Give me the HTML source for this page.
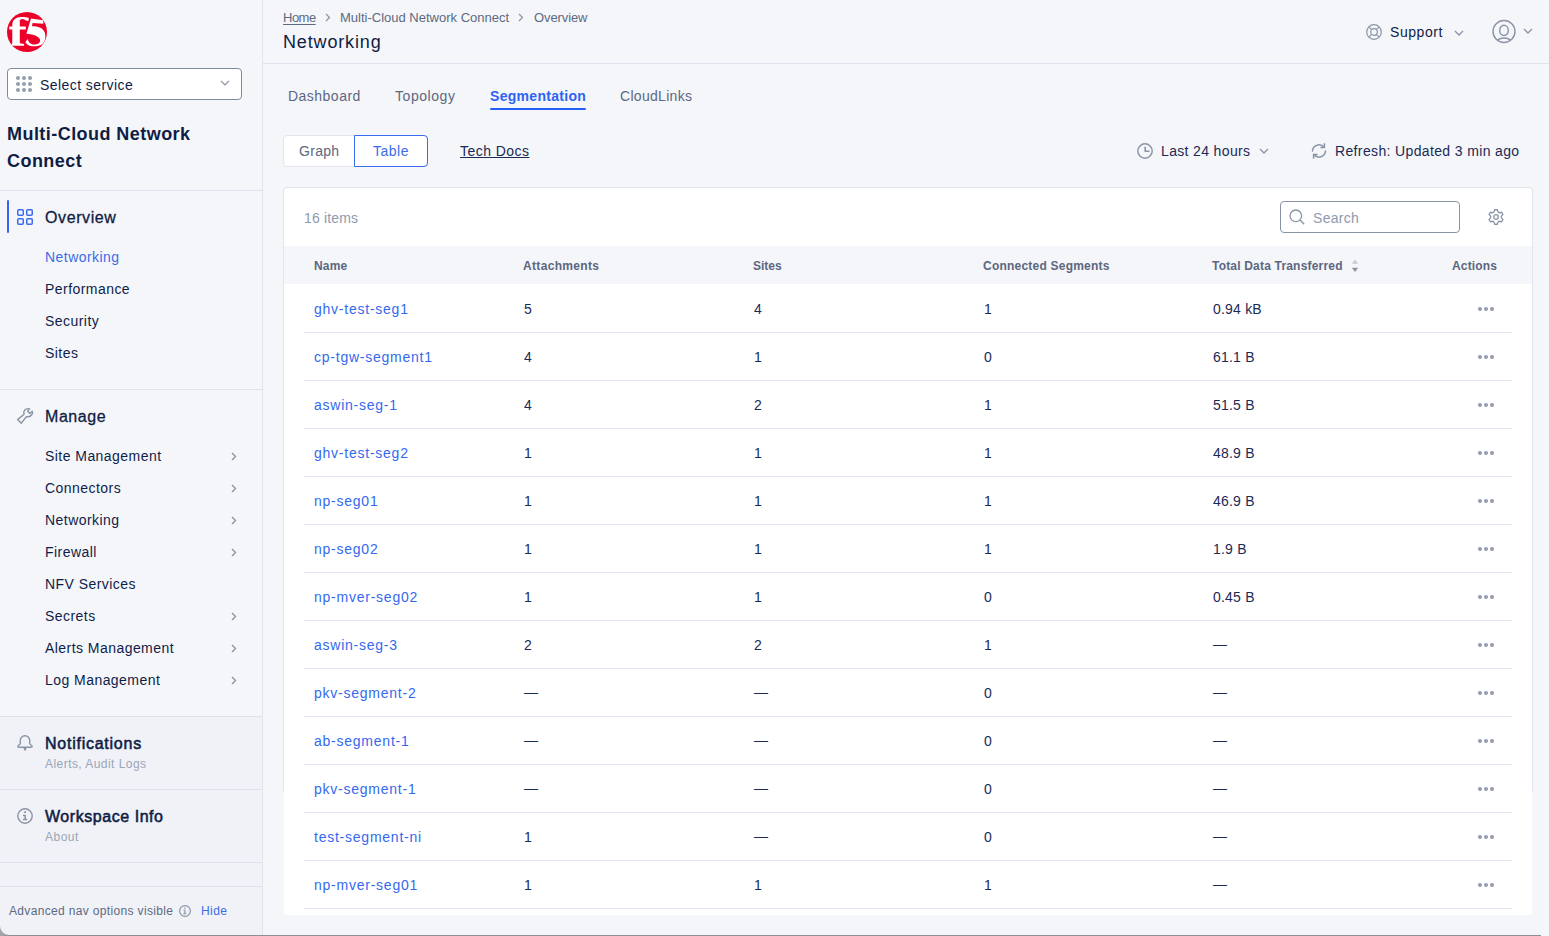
<!DOCTYPE html>
<html><head><meta charset="utf-8">
<style>
*{box-sizing:border-box;margin:0;padding:0}
html,body{width:1549px;height:936px;overflow:hidden;background:#f5f6f9;-webkit-font-smoothing:antialiased;font-family:"Liberation Sans",sans-serif;color:#0f1d45}
.a{position:absolute;white-space:nowrap;line-height:1}
svg{position:absolute;overflow:visible}
#side{position:absolute;left:0;top:0;width:263px;height:936px;background:#f5f6f9;border-right:1px solid #dfe3ec}
.hr{position:absolute;left:0;width:262px;height:1px;background:#dde3ee}
.sub{font-size:14px;letter-spacing:0.45px;color:#0f1d4a}
.chev{position:absolute;left:231px;width:6px;height:9px}
#main{position:absolute;left:263px;top:0;width:1286px;height:936px;background:#f5f6f9}
.tab{font-size:14px;letter-spacing:0.3px;color:#5b6882}
.th{font-size:12px;font-weight:700;color:#5b6780;letter-spacing:0.2px}
.td{font-size:14px;color:#1b2a55;letter-spacing:0.2px}
.lnk{font-size:14px;color:#3469ee;letter-spacing:0.76px}
.rl{position:absolute;left:304px;width:1208px;height:1px;background:#dfe4ee}
.dots{position:absolute;left:1478px;width:16px;height:4px}
</style></head><body>
<div id="side">
  <!-- F5 logo -->
  <svg style="left:7px;top:12px" width="40" height="40" viewBox="0 0 40 40">
    <circle cx="20" cy="20" r="20" fill="#ec0029"/>
    <path fill="#fff" d="M5.3 31.5L5.3 13C5.3 8.2 8.6 5.1 14.5 5.1C17.5 5.1 20 5.4 21.8 6L21.4 9C19.5 9.2 18.2 7.6 16.5 7.2C14.8 6.9 13.3 7.5 12.8 8.6L12.8 31.2L17.1 32L17.1 33.8L4.7 33.8L4.7 32Z M2.3 14.6L18.8 14.5L18.8 17.5L2.5 17.5C2.1 16.6 2.1 15.4 2.3 14.6Z M24 6.4L36.3 8.3L36.3 11.8L25.6 11.1L25 14.2C30 14 35.5 15.5 37.6 20C39 24 38.5 29 35.5 32C33 34 29 34.4 25.5 34.2C22.5 34 20 33 18.4 30.2L20.5 26.9C21.5 29.5 22.8 31.2 24.5 32C26.5 32.9 29.5 32.8 31.5 31.5C33.5 30 33.6 27.5 32 26C29.5 23.5 24.5 22 19.4 21.8Z"/>
  </svg>
  <!-- select service -->
  <div style="position:absolute;left:7px;top:68px;width:235px;height:32px;background:#fff;border:1px solid #7f8a9e;border-radius:4px"></div>
  <svg style="left:16px;top:76px" width="16" height="16" viewBox="0 0 16 16" fill="#939daf">
    <circle cx="2" cy="2" r="2"/><circle cx="8" cy="2" r="2"/><circle cx="14" cy="2" r="2"/>
    <circle cx="2" cy="8" r="2"/><circle cx="8" cy="8" r="2"/><circle cx="14" cy="8" r="2"/>
    <circle cx="2" cy="14" r="2"/><circle cx="8" cy="14" r="2"/><circle cx="14" cy="14" r="2"/>
  </svg>
  <div class="a" style="left:40px;top:78px;font-size:14px;letter-spacing:0.43px;color:#0f1d45">Select service</div>
  <svg style="left:220px;top:80px" width="10" height="6" viewBox="0 0 10 6"><path d="M1 1l4 4 4-4" fill="none" stroke="#8a94a7" stroke-width="1.2"/></svg>

  <div class="a" style="left:7px;top:121px;font-size:18px;font-weight:700;letter-spacing:0.45px;color:#0f1d45;line-height:27px">Multi-Cloud Network<br>Connect</div>

  <div class="hr" style="top:190px"></div>
  <!-- Overview -->
  <div style="position:absolute;left:7px;top:200px;width:2px;height:33px;background:#3366f0;border-radius:1px"></div>
  <svg style="left:17px;top:209px" width="16" height="16" viewBox="0 0 16 16" fill="none" stroke="#3a6cf0" stroke-width="1.5">
    <rect x="0.75" y="0.75" width="5.5" height="5.5" rx="1"/><rect x="9.75" y="0.75" width="5.5" height="5.5" rx="1"/>
    <rect x="0.75" y="9.75" width="5.5" height="5.5" rx="1"/><rect x="9.75" y="9.75" width="5.5" height="5.5" rx="1"/>
  </svg>
  <div class="a" style="left:45px;top:210px;font-size:16px;letter-spacing:0.6px;color:#0f1d45;-webkit-text-stroke:0.3px #0f1d45">Overview</div>
  <div class="a sub" style="left:45px;top:250px;color:#3a6ce8">Networking</div>
  <div class="a sub" style="left:45px;top:282px">Performance</div>
  <div class="a sub" style="left:45px;top:314px">Security</div>
  <div class="a sub" style="left:45px;top:346px">Sites</div>

  <div class="hr" style="top:389px"></div>
  <!-- Manage -->
  <svg style="left:17px;top:408px" width="16" height="16" viewBox="0 0 16 16" fill="none" stroke="#8a94a7" stroke-width="1.4" stroke-linejoin="round">
    <path d="M0.6 11.6L4.2 15.2L9.4 8.6C11 9 13.5 8.5 14.8 6.8C15.6 5.8 15.8 4.4 15.3 3.3L12.9 5.4L10.6 3.2L12.6 0.9C10.8 0.3 9 0.8 7.8 2C6.9 3 6.6 4.9 7.1 6.2Z"/>
  </svg>
  <div class="a" style="left:45px;top:409px;font-size:16px;letter-spacing:0.55px;color:#0f1d45;-webkit-text-stroke:0.3px #0f1d45">Manage</div>
  <div class="a sub" style="left:45px;top:449px">Site Management</div>
  <div class="a sub" style="left:45px;top:481px">Connectors</div>
  <div class="a sub" style="left:45px;top:513px">Networking</div>
  <div class="a sub" style="left:45px;top:545px">Firewall</div>
  <div class="a sub" style="left:45px;top:577px">NFV Services</div>
  <div class="a sub" style="left:45px;top:609px">Secrets</div>
  <div class="a sub" style="left:45px;top:641px">Alerts Management</div>
  <div class="a sub" style="left:45px;top:673px">Log Management</div>
  <svg class="chev" style="top:452px" viewBox="0 0 6 9"><path d="M1 1l3.5 3.5L1 8" fill="none" stroke="#8a94a7" stroke-width="1.4"/></svg>
  <svg class="chev" style="top:484px" viewBox="0 0 6 9"><path d="M1 1l3.5 3.5L1 8" fill="none" stroke="#8a94a7" stroke-width="1.4"/></svg>
  <svg class="chev" style="top:516px" viewBox="0 0 6 9"><path d="M1 1l3.5 3.5L1 8" fill="none" stroke="#8a94a7" stroke-width="1.4"/></svg>
  <svg class="chev" style="top:548px" viewBox="0 0 6 9"><path d="M1 1l3.5 3.5L1 8" fill="none" stroke="#8a94a7" stroke-width="1.4"/></svg>
  <svg class="chev" style="top:612px" viewBox="0 0 6 9"><path d="M1 1l3.5 3.5L1 8" fill="none" stroke="#8a94a7" stroke-width="1.4"/></svg>
  <svg class="chev" style="top:644px" viewBox="0 0 6 9"><path d="M1 1l3.5 3.5L1 8" fill="none" stroke="#8a94a7" stroke-width="1.4"/></svg>
  <svg class="chev" style="top:676px" viewBox="0 0 6 9"><path d="M1 1l3.5 3.5L1 8" fill="none" stroke="#8a94a7" stroke-width="1.4"/></svg>

  <!-- bottom sections -->
  <div style="position:absolute;left:0;top:716px;width:262px;height:220px;background:#f0f2f7"></div>
  <div class="hr" style="top:716px"></div>
  <svg style="left:17px;top:735px" width="16" height="16" viewBox="0 0 16 16" fill="none" stroke="#8a94a7" stroke-width="1.4" stroke-linejoin="round">
    <path d="M8 0.8C5 0.8 3.3 3 3.3 5.5V8.4C3.3 9.6 0.8 10.4 0.8 11.5C0.8 12.1 1.5 12.3 2.5 12.3H13.5C14.5 12.3 15.2 12.1 15.2 11.5C15.2 10.4 12.7 9.6 12.7 8.4V5.5C12.7 3 11 0.8 8 0.8Z"/><path d="M6.4 12.4L7 14.9C7.3 15.7 8.7 15.7 9 14.9L9.6 12.4Z" fill="#8a94a7" stroke="none"/>
  </svg>
  <div class="a" style="left:45px;top:736px;font-size:16px;letter-spacing:0.75px;color:#0f1d45;-webkit-text-stroke:0.55px #0f1d45">Notifications</div>
  <div class="a" style="left:45px;top:758px;font-size:12px;letter-spacing:0.45px;color:#9aa5b8">Alerts, Audit Logs</div>
  <div class="hr" style="top:789px"></div>
  <svg style="left:17px;top:808px" width="16" height="16" viewBox="0 0 16 16" fill="none" stroke="#8a94a7" stroke-width="1.4">
    <circle cx="8" cy="8" r="7.2"/><path d="M6 7.4H8.2V11.6M5.9 11.6H10.2" stroke-width="1.5"/><rect x="7.1" y="3.3" width="1.9" height="1.7" fill="#8a94a7" stroke="none"/>
  </svg>
  <div class="a" style="left:45px;top:809px;font-size:16px;letter-spacing:0.55px;color:#0f1d45;-webkit-text-stroke:0.55px #0f1d45">Workspace Info</div>
  <div class="a" style="left:45px;top:831px;font-size:12px;letter-spacing:0.5px;color:#9aa5b8">About</div>
  <div class="hr" style="top:862px"></div>
  <div class="hr" style="top:886px"></div>
  <div class="a" style="left:9px;top:905px;font-size:12px;letter-spacing:0.34px;color:#5d6a82">Advanced nav options visible</div>
  <svg style="left:179px;top:905px" width="12" height="12" viewBox="0 0 12 12" fill="none" stroke="#8a94a7" stroke-width="1.2">
    <circle cx="6" cy="6" r="5.4"/><path d="M4.5 5.3H5.9V8.7M4.3 8.7H7.4" stroke-width="1.1"/><rect x="5.2" y="2.5" width="1.3" height="1.2" fill="#8a94a7" stroke="none"/>
  </svg>
  <div class="a" style="left:201px;top:905px;font-size:12px;letter-spacing:0.4px;color:#3a6ce8">Hide</div>
</div>

<div id="main"></div>
<!-- header -->
<div class="a" style="left:283px;top:11px;font-size:13px;letter-spacing:-0.5px;color:#5d6a82;text-decoration:underline;text-underline-offset:2px">Home</div>
<svg style="left:325px;top:13px" width="6" height="9" viewBox="0 0 6 9"><path d="M1 1l3.5 3.5L1 8" fill="none" stroke="#8a94a7" stroke-width="1.2"/></svg>
<div class="a" style="left:340px;top:11px;font-size:13px;color:#5d6a82">Multi-Cloud Network Connect</div>
<svg style="left:518px;top:13px" width="6" height="9" viewBox="0 0 6 9"><path d="M1 1l3.5 3.5L1 8" fill="none" stroke="#8a94a7" stroke-width="1.2"/></svg>
<div class="a" style="left:534px;top:11px;font-size:13px;color:#5d6a82;letter-spacing:-0.1px">Overview</div>
<div class="a" style="left:283px;top:33px;font-size:18px;letter-spacing:0.85px;color:#0f1d45">Networking</div>
<div style="position:absolute;left:263px;top:63px;width:1286px;height:1px;background:#dfe4ee"></div>

<svg style="left:1366px;top:24px" width="16" height="16" viewBox="0 0 16 16" fill="none" stroke="#8a94a7" stroke-width="1.2">
  <circle cx="8" cy="8" r="7.3"/><circle cx="8" cy="8" r="3.3"/><path d="M2.8 2.8l2.9 2.9M13.2 2.8l-2.9 2.9M2.8 13.2l2.9-2.9M13.2 13.2l-2.9-2.9"/>
</svg>
<div class="a" style="left:1390px;top:25px;font-size:14px;letter-spacing:0.55px;color:#0f1d45">Support</div>
<svg style="left:1454px;top:30px" width="10" height="6" viewBox="0 0 10 6"><path d="M1 1l4 4 4-4" fill="none" stroke="#8a94a7" stroke-width="1.3"/></svg>
<svg style="left:1492px;top:20px" width="24" height="24" viewBox="0 0 24 24" fill="none" stroke="#8a94a7" stroke-width="1.4">
  <circle cx="12" cy="11.5" r="11"/><ellipse cx="12" cy="10.4" rx="4.3" ry="5.1"/><path d="M5.2 20.1C7.2 18.7 9.5 18 12 18s4.8.7 6.8 2.1"/>
</svg>
<svg style="left:1523px;top:28px" width="10" height="6" viewBox="0 0 10 6"><path d="M1 1l4 4 4-4" fill="none" stroke="#8a94a7" stroke-width="1.3"/></svg>

<!-- tabs -->
<div class="a tab" style="left:288px;top:89px;letter-spacing:0.48px">Dashboard</div>
<div class="a tab" style="left:395px;top:89px;letter-spacing:0.55px">Topology</div>
<div class="a tab" style="left:490px;top:89px;font-weight:700;color:#2d63f2">Segmentation</div>
<div style="position:absolute;left:490px;top:108px;width:96px;height:2px;background:#2260f5;border-radius:1px"></div>
<div class="a tab" style="left:620px;top:89px">CloudLinks</div>

<!-- graph/table -->
<div style="position:absolute;left:283px;top:135px;width:145px;height:32px;background:#fff;border:1px solid #e1e5ee;border-radius:4px"></div>
<div style="position:absolute;left:354px;top:135px;width:74px;height:32px;border:1px solid #3a6cf0;border-radius:0 4px 4px 0"></div>
<div class="a" style="left:299px;top:144px;font-size:14px;letter-spacing:0.3px;color:#5b6882">Graph</div>
<div class="a" style="left:373px;top:144px;font-size:14px;letter-spacing:0.5px;color:#3a6ce8">Table</div>
<div class="a" style="left:460px;top:144px;font-size:14px;letter-spacing:0.45px;color:#1b2a55;text-decoration:underline;text-underline-offset:1px">Tech Docs</div>

<svg style="left:1137px;top:143px" width="16" height="16" viewBox="0 0 16 16" fill="none" stroke="#8a94a7" stroke-width="1.45">
  <circle cx="8" cy="8" r="7.2"/><path d="M8.2 3.7V8.3H12.5" stroke-linejoin="round" stroke-width="1.6"/>
</svg>
<div class="a" style="left:1161px;top:144px;font-size:14px;letter-spacing:0.35px;color:#1b2a55">Last 24 hours</div>
<svg style="left:1259px;top:148px" width="10" height="6" viewBox="0 0 10 6"><path d="M1 1l4 4 4-4" fill="none" stroke="#8a94a7" stroke-width="1.3"/></svg>
<svg style="left:1311px;top:143px" width="16" height="16" viewBox="0 0 16 16" fill="none" stroke="#8a94a7" stroke-width="1.5">
  <path d="M1.5 8A6.5 6.5 0 0 1 13 4.3M14.5 8A6.5 6.5 0 0 1 3 11.7" stroke-linecap="round"/><path d="M13.4 0.3V4.5H9.4M2.6 15.7V11.5H6.6"/>
</svg>
<div class="a" style="left:1335px;top:144px;font-size:14px;letter-spacing:0.36px;color:#1b2a55">Refresh: Updated 3 min ago</div>

<!-- card -->
<div style="position:absolute;left:284px;top:188px;width:1248px;height:727px;background:#fff"></div>
<div style="position:absolute;left:283px;top:187px;width:1250px;height:604px;border:1px solid #e1e5ee;border-bottom:none;border-radius:4px 4px 0 0;background:#fff"></div>
<div class="a" style="left:304px;top:211px;font-size:14px;letter-spacing:0.15px;color:#8e9ab0">16 items</div>
<div style="position:absolute;left:1280px;top:201px;width:180px;height:32px;border:1px solid #8a94a7;border-radius:4px;background:#fff"></div>
<svg style="left:1289px;top:209px" width="16" height="16" viewBox="0 0 16 16" fill="none" stroke="#8a94a7" stroke-width="1.3">
  <circle cx="6.8" cy="6.8" r="5.8"/><path d="M11 11l4.2 4.2"/>
</svg>
<div class="a" style="left:1313px;top:211px;font-size:14px;letter-spacing:0.3px;color:#8e9ab0">Search</div>
<svg style="left:1488px;top:209px" width="16" height="16" viewBox="0 0 16 16" fill="none" stroke="#8a94a7" stroke-width="1.3" stroke-linejoin="miter">
  <path d="M5.84 3.16L6.72 0.76L9.28 0.76L10.16 3.16L11.12 3.71L13.63 3.28L14.91 5.49L13.27 7.45L13.27 8.55L14.91 10.51L13.630 12.72L11.12 12.29L10.16 12.84L9.28 15.24L6.72 15.24L5.84 12.84L4.88 12.29L2.37 12.72L1.09 10.51L2.73 8.55L2.73 7.45L1.09 5.49L2.37 3.28L4.88 3.71Z"/><circle cx="8" cy="8" r="2.3"/>
</svg>
<div style="position:absolute;left:284px;top:246px;width:1248px;height:38px;background:#f5f6f9"></div>
<div class="a th" style="left:314px;top:260px">Name</div>
<div class="a th" style="left:523px;top:260px;letter-spacing:0.33px">Attachments</div>
<div class="a th" style="left:753px;top:260px;letter-spacing:0">Sites</div>
<div class="a th" style="left:983px;top:260px;letter-spacing:0.22px">Connected Segments</div>
<div class="a th" style="left:1212px;top:260px;letter-spacing:0.19px">Total Data Transferred</div>
<svg style="left:1351px;top:259px" width="8" height="13" viewBox="0 0 8 13"><path d="M4 0.5L7.2 4.8H0.8z" fill="#c5ccd8"/><path d="M4 13L7.2 8.7H0.8z" fill="#8a94a7"/></svg>
<div class="a th" style="left:1452px;top:260px;letter-spacing:0.15px">Actions</div>

<div id="rows"></div>
<div class="a lnk" style="left:314px;top:302px">ghv-test-seg1</div>
<div class="a td" style="left:524px;top:302px">5</div>
<div class="a td" style="left:754px;top:302px">4</div>
<div class="a td" style="left:984px;top:302px">1</div>
<div class="a td" style="left:1213px;top:302px">0.94 kB</div>
<svg class="dots" style="top:306.7px" viewBox="0 0 16 4" fill="#939cae"><circle cx="2" cy="2" r="2"/><circle cx="8" cy="2" r="2"/><circle cx="14" cy="2" r="2"/></svg>
<div class="rl" style="top:332px"></div>
<div class="a lnk" style="left:314px;top:350px">cp-tgw-segment1</div>
<div class="a td" style="left:524px;top:350px">4</div>
<div class="a td" style="left:754px;top:350px">1</div>
<div class="a td" style="left:984px;top:350px">0</div>
<div class="a td" style="left:1213px;top:350px">61.1 B</div>
<svg class="dots" style="top:354.7px" viewBox="0 0 16 4" fill="#939cae"><circle cx="2" cy="2" r="2"/><circle cx="8" cy="2" r="2"/><circle cx="14" cy="2" r="2"/></svg>
<div class="rl" style="top:380px"></div>
<div class="a lnk" style="left:314px;top:398px">aswin-seg-1</div>
<div class="a td" style="left:524px;top:398px">4</div>
<div class="a td" style="left:754px;top:398px">2</div>
<div class="a td" style="left:984px;top:398px">1</div>
<div class="a td" style="left:1213px;top:398px">51.5 B</div>
<svg class="dots" style="top:402.7px" viewBox="0 0 16 4" fill="#939cae"><circle cx="2" cy="2" r="2"/><circle cx="8" cy="2" r="2"/><circle cx="14" cy="2" r="2"/></svg>
<div class="rl" style="top:428px"></div>
<div class="a lnk" style="left:314px;top:446px">ghv-test-seg2</div>
<div class="a td" style="left:524px;top:446px">1</div>
<div class="a td" style="left:754px;top:446px">1</div>
<div class="a td" style="left:984px;top:446px">1</div>
<div class="a td" style="left:1213px;top:446px">48.9 B</div>
<svg class="dots" style="top:450.7px" viewBox="0 0 16 4" fill="#939cae"><circle cx="2" cy="2" r="2"/><circle cx="8" cy="2" r="2"/><circle cx="14" cy="2" r="2"/></svg>
<div class="rl" style="top:476px"></div>
<div class="a lnk" style="left:314px;top:494px">np-seg01</div>
<div class="a td" style="left:524px;top:494px">1</div>
<div class="a td" style="left:754px;top:494px">1</div>
<div class="a td" style="left:984px;top:494px">1</div>
<div class="a td" style="left:1213px;top:494px">46.9 B</div>
<svg class="dots" style="top:498.7px" viewBox="0 0 16 4" fill="#939cae"><circle cx="2" cy="2" r="2"/><circle cx="8" cy="2" r="2"/><circle cx="14" cy="2" r="2"/></svg>
<div class="rl" style="top:524px"></div>
<div class="a lnk" style="left:314px;top:542px">np-seg02</div>
<div class="a td" style="left:524px;top:542px">1</div>
<div class="a td" style="left:754px;top:542px">1</div>
<div class="a td" style="left:984px;top:542px">1</div>
<div class="a td" style="left:1213px;top:542px">1.9 B</div>
<svg class="dots" style="top:546.7px" viewBox="0 0 16 4" fill="#939cae"><circle cx="2" cy="2" r="2"/><circle cx="8" cy="2" r="2"/><circle cx="14" cy="2" r="2"/></svg>
<div class="rl" style="top:572px"></div>
<div class="a lnk" style="left:314px;top:590px">np-mver-seg02</div>
<div class="a td" style="left:524px;top:590px">1</div>
<div class="a td" style="left:754px;top:590px">1</div>
<div class="a td" style="left:984px;top:590px">0</div>
<div class="a td" style="left:1213px;top:590px">0.45 B</div>
<svg class="dots" style="top:594.7px" viewBox="0 0 16 4" fill="#939cae"><circle cx="2" cy="2" r="2"/><circle cx="8" cy="2" r="2"/><circle cx="14" cy="2" r="2"/></svg>
<div class="rl" style="top:620px"></div>
<div class="a lnk" style="left:314px;top:638px">aswin-seg-3</div>
<div class="a td" style="left:524px;top:638px">2</div>
<div class="a td" style="left:754px;top:638px">2</div>
<div class="a td" style="left:984px;top:638px">1</div>
<div class="a td" style="left:1213px;top:637px">—</div>
<svg class="dots" style="top:642.7px" viewBox="0 0 16 4" fill="#939cae"><circle cx="2" cy="2" r="2"/><circle cx="8" cy="2" r="2"/><circle cx="14" cy="2" r="2"/></svg>
<div class="rl" style="top:668px"></div>
<div class="a lnk" style="left:314px;top:686px">pkv-segment-2</div>
<div class="a td" style="left:524px;top:685px">—</div>
<div class="a td" style="left:754px;top:685px">—</div>
<div class="a td" style="left:984px;top:686px">0</div>
<div class="a td" style="left:1213px;top:685px">—</div>
<svg class="dots" style="top:690.7px" viewBox="0 0 16 4" fill="#939cae"><circle cx="2" cy="2" r="2"/><circle cx="8" cy="2" r="2"/><circle cx="14" cy="2" r="2"/></svg>
<div class="rl" style="top:716px"></div>
<div class="a lnk" style="left:314px;top:734px">ab-segment-1</div>
<div class="a td" style="left:524px;top:733px">—</div>
<div class="a td" style="left:754px;top:733px">—</div>
<div class="a td" style="left:984px;top:734px">0</div>
<div class="a td" style="left:1213px;top:733px">—</div>
<svg class="dots" style="top:738.7px" viewBox="0 0 16 4" fill="#939cae"><circle cx="2" cy="2" r="2"/><circle cx="8" cy="2" r="2"/><circle cx="14" cy="2" r="2"/></svg>
<div class="rl" style="top:764px"></div>
<div class="a lnk" style="left:314px;top:782px">pkv-segment-1</div>
<div class="a td" style="left:524px;top:781px">—</div>
<div class="a td" style="left:754px;top:781px">—</div>
<div class="a td" style="left:984px;top:782px">0</div>
<div class="a td" style="left:1213px;top:781px">—</div>
<svg class="dots" style="top:786.7px" viewBox="0 0 16 4" fill="#939cae"><circle cx="2" cy="2" r="2"/><circle cx="8" cy="2" r="2"/><circle cx="14" cy="2" r="2"/></svg>
<div class="rl" style="top:812px"></div>
<div class="a lnk" style="left:314px;top:830px">test-segment-ni</div>
<div class="a td" style="left:524px;top:830px">1</div>
<div class="a td" style="left:754px;top:829px">—</div>
<div class="a td" style="left:984px;top:830px">0</div>
<div class="a td" style="left:1213px;top:829px">—</div>
<svg class="dots" style="top:834.7px" viewBox="0 0 16 4" fill="#939cae"><circle cx="2" cy="2" r="2"/><circle cx="8" cy="2" r="2"/><circle cx="14" cy="2" r="2"/></svg>
<div class="rl" style="top:860px"></div>
<div class="a lnk" style="left:314px;top:878px">np-mver-seg01</div>
<div class="a td" style="left:524px;top:878px">1</div>
<div class="a td" style="left:754px;top:878px">1</div>
<div class="a td" style="left:984px;top:878px">1</div>
<div class="a td" style="left:1213px;top:877px">—</div>
<svg class="dots" style="top:882.7px" viewBox="0 0 16 4" fill="#939cae"><circle cx="2" cy="2" r="2"/><circle cx="8" cy="2" r="2"/><circle cx="14" cy="2" r="2"/></svg>
<div class="rl" style="top:908px"></div>
<div style="position:absolute;left:0;top:935px;width:1541px;height:1px;background:#8f8f92"></div>
<svg style="left:0;top:924px" width="12" height="12" viewBox="0 0 12 12"><path d="M0 2A9 9 0 0 0 9 11L0 12Z" fill="#a5a5a9"/></svg>
</body></html>
